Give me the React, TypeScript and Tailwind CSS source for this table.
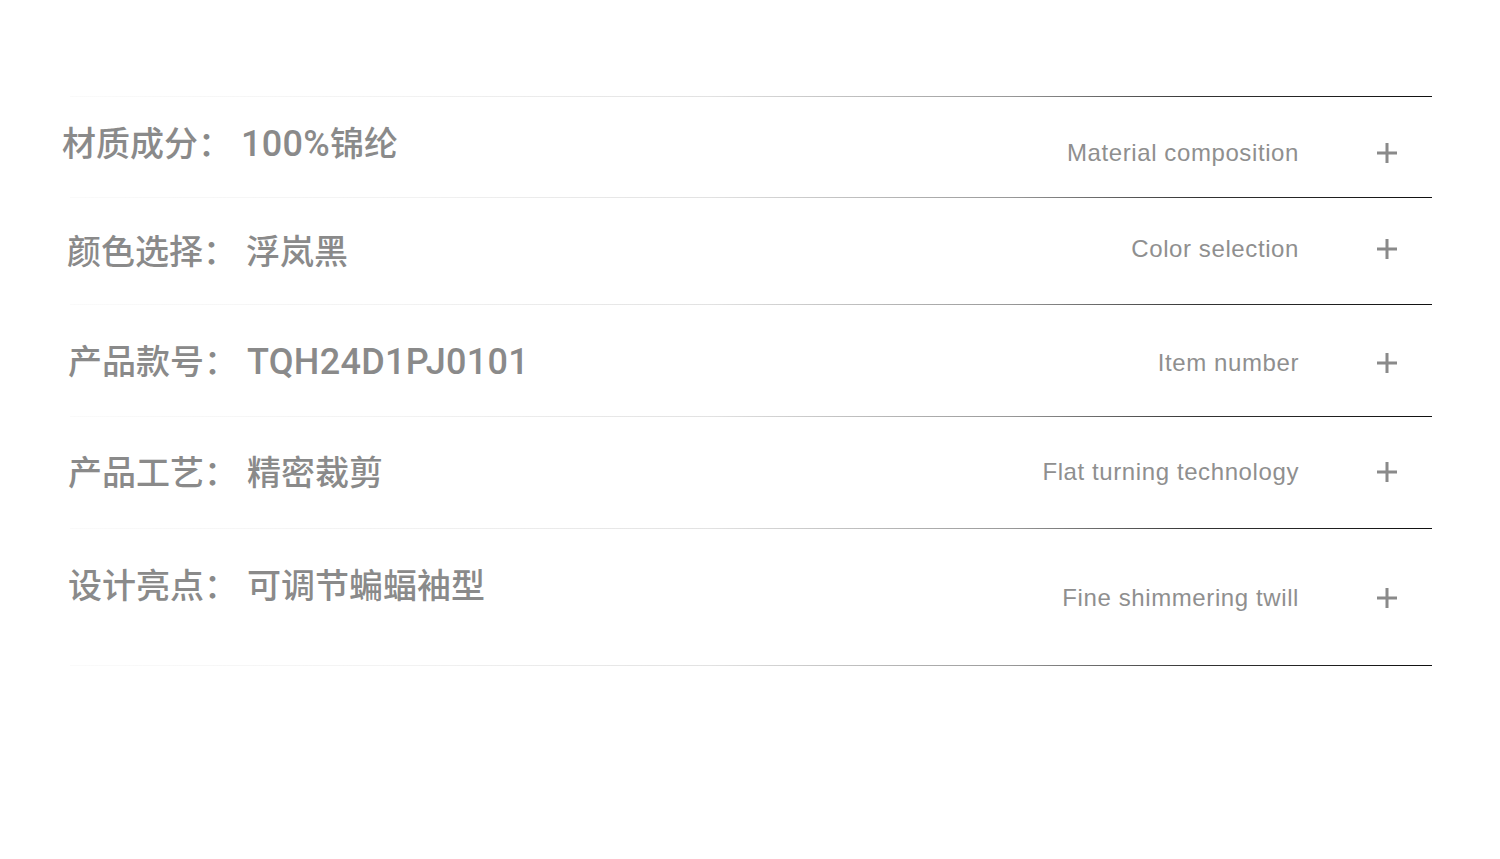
import React from 'react';

const rows = [
  { label: '材质成分', num: '100%', value: '锦纶', en: 'Material composition', row: 'h-[100px] pl-0', cn2: 'mb-[7px]', en2: 'mt-[12px]' },
  { label: '颜色选择', num: '', value: '浮岚黑', en: 'Color selection', row: 'h-[106px] pl-[5px]', cn2: 'mt-[2px]', en2: 'mb-[5px]' },
  { label: '产品款号', num: 'TQH24D1PJ0101', value: '', en: 'Item number', row: 'h-[111px] pl-[6px]', cn2: 'mt-[3px]', en2: 'mt-[4px]' },
  { label: '产品工艺', num: '', value: '精密裁剪', en: 'Flat turning technology', row: 'h-[111px] pl-[6px]', cn2: 'mt-[1px]', en2: 'mb-[2px]' },
  { label: '设计亮点', num: '', value: '可调节蝙蝠袖型', en: 'Fine shimmering twill', row: 'h-[136px] pl-[6px]', cn2: 'mb-[23px]', en2: 'mt-[1px]' },
];

const Line = () => (
  <div className="ml-[8px] h-px bg-[linear-gradient(to_right,#fafafa_0%,#f2f2f2_25%,#e2e2e2_47%,#999999_69%,#333333_83%,#111111_100%)]" />
);

const Plus = () => (
  <svg width="20" height="20" viewBox="0 0 20 20" className="shrink-0">
    <path d="M10 0v20M0 10h20" stroke="#8a8a8a" strokeWidth="3" />
  </svg>
);

export default function App() {
  return (
    <div className="min-h-[859px] w-[1500px] bg-white pt-[96px] font-['Liberation_Sans','Noto_Sans_CJK_SC',sans-serif]">
      <div className="ml-[62px] w-[1370px]">
        <Line />
        {rows.map((r) => (
          <div key={r.en}>
            <div className={`flex items-center ${r.row}`}>
              <div className={`flex-1 font-['Roboto','Noto_Sans_CJK_SC',sans-serif] text-[34px] font-medium leading-none text-[#8a8a8a] ${r.cn2}`}>
                {r.label}：
                <span className="ml-[9px]">
                  {r.num && <span className="text-[36px] tracking-[0.3px]">{r.num}</span>}
                  {r.value}
                </span>
              </div>
              <div className={`flex items-center gap-[78px] pr-[35px] ${r.en2}`}>
                <span className="text-[24px] leading-none tracking-[0.6px] text-[#8f8f8f]">{r.en}</span>
                <Plus />
              </div>
            </div>
            <Line />
          </div>
        ))}
      </div>
    </div>
  );
}
